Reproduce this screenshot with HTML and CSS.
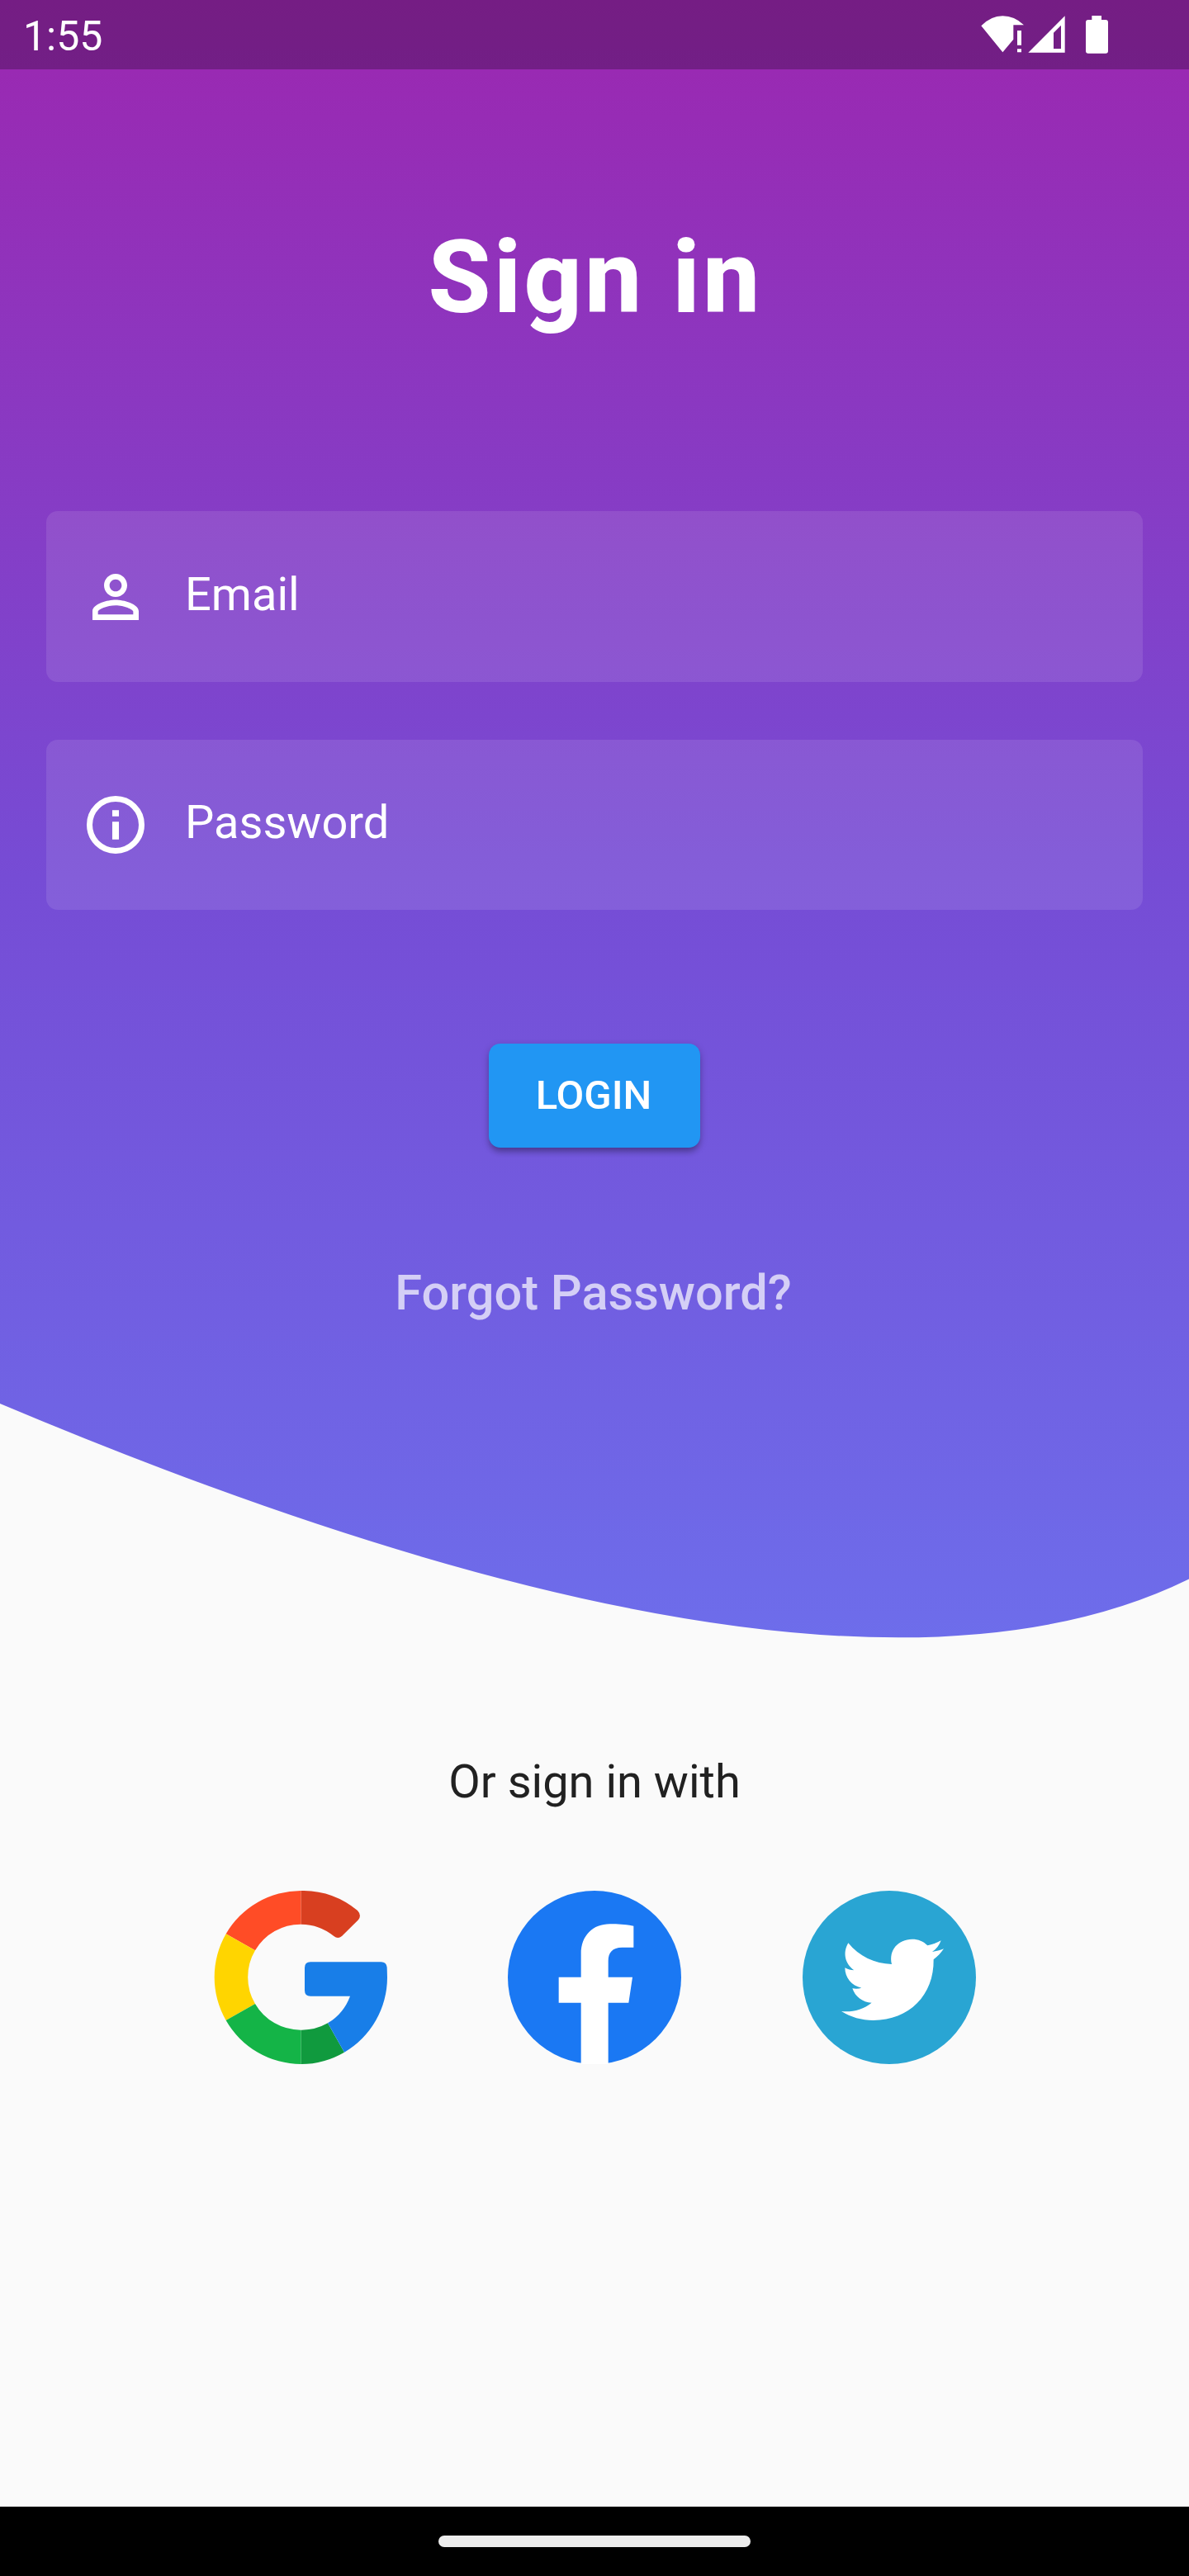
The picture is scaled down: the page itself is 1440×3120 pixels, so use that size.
FILE: index.html
```
<!DOCTYPE html>
<html lang="en">
<head>
<meta charset="utf-8">
<title>Sign in</title>
<link rel="stylesheet" href="styles.css">
</head>
<body>
<div class="screen">
  <header class="hero">
    <div class="status-bar">
      <span class="clock">1:55</span>
      <svg class="status-icons" viewBox="0 0 840 252" fill="#fff" aria-hidden="true">
        <path d="M85 94Q120 58 163 58T240 91H202V143L163 190Z"/>
        <path d="M216 111h15v53h-15zM216 178h15v12h-15z"/>
        <path fill-rule="evenodd" d="M256 191L389 58V191ZM348 119V177H375V92Z"/>
        <path d="M487 57h35v15h15q9 0 9 9v104q0 9-9 9h-63q-9 0-9-9V81q0-9 9-9h13z"/>
      </svg>
    </div>
    <h1 class="title">Sign in</h1>
    <form class="form">
      <div class="field">
        <svg class="field-icon" viewBox="0 0 24 24" fill="#fff" aria-hidden="true">
          <path d="M12 5.9c1.16 0 2.1.94 2.1 2.1s-.94 2.1-2.1 2.1S9.9 9.16 9.9 8s.94-2.1 2.1-2.1m0 9c2.97 0 6.1 1.46 6.1 2.1v1.1H5.9V17c0-.64 3.13-2.1 6.1-2.1M12 4C9.79 4 8 5.79 8 8s1.79 4 4 4 4-1.79 4-4-1.79-4-4-4zm0 9c-2.67 0-8 1.34-8 4v3h16v-3c0-2.66-5.33-4-8-4z"/>
        </svg>
        <label class="field-label">Email</label>
      </div>
      <div class="field">
        <svg class="field-icon" viewBox="0 0 24 24" fill="#fff" aria-hidden="true">
          <circle cx="12" cy="12" r="9" fill="none" stroke="#fff" stroke-width="2"/>
          <path d="M10.85 6.9h2.3v2.15h-2.3zM10.85 10.9h2.3v6.2h-2.3z"/>
        </svg>
        <label class="field-label">Password</label>
      </div>
      <button class="login" type="button">LOGIN</button>
      <a class="forgot">Forgot Password?</a>
    </form>
  </header>
  <main class="social">
    <p class="social-label">Or sign in with</p>
    <div class="logos">
      <svg class="logo" viewBox="54 60 630 630" aria-label="Google">
        <path fill="#ff4c26" d="M98 217A315 315 0 0 1 371 60V182A191 191 0 0 0 204 277Z"/>
        <path fill="#d83f20" d="M371 60A315 315 0 0 1 576 132Q592 149 579 166L519 225Q505 237 490 225A191 191 0 0 0 371 182Z"/>
        <path fill="#ffd500" d="M98 217A315 315 0 0 0 98 531L204 471A191 191 0 0 1 204 277Z"/>
        <path fill="#14b447" d="M98 531A315 315 0 0 0 371 690V566A191 191 0 0 1 204 471Z"/>
        <path fill="#109a3e" d="M371 690A315 315 0 0 0 528 647L468 541A191 191 0 0 1 371 566Z"/>
        <path fill="#187ee8" d="M528 647A315 315 0 0 0 684 375L683 338Q680 319 662 319H405Q384 319 384 340V422Q384 443 405 443H549A191 191 0 0 1 468 541Z"/>
      </svg>
      <svg class="logo" viewBox="45 60 630 630" aria-label="Facebook">
        <circle cx="360" cy="375" r="315" fill="#1a78f3"/>
        <path fill="#fff" d="M311 690V467H230V374H311V290C311 222 355 181 416 181C450 181 480 183 502 188V266H460C425 266 410 285 410 315V374H498L484 467H410V690Z"/>
      </svg>
      <svg class="logo" viewBox="63 60 630 630" aria-label="Twitter">
        <circle cx="378" cy="375" r="315" fill="#29a5d3"/>
        <path fill="#fff" d="M229 250C268 298 325 326 387 327C375 275 410 237 461 236C483 236 503 244 517 259C534 256 550 250 566 241C560 258 549 273 534 282C549 280 563 276 576 271C566 286 554 299 539 310C541 440 450 531 320 531C278 531 238 519 204 498C244 502 283 492 314 467C281 466 254 445 244 415C255 417 266 417 277 413C241 406 217 376 217 340C227 346 239 349 250 349C217 326 208 285 229 250Z"/>
      </svg>
    </div>
  </main>
  <footer class="nav-bar"><span class="nav-pill"></span></footer>
</div>
</body>
</html>
```
FILE: styles.css
```
* { box-sizing: border-box; }
body {
  margin: 0;
  background: #fafafa;
  font-family: Roboto, "Liberation Sans", sans-serif;
}
.screen {
  display: flex;
  flex-direction: column;
  width: 1440px;
  height: 3120px;
  background: #fafafa;
}
.hero {
  flex: none;
  height: 2125px;
  background: linear-gradient(180deg, #9c27b0 0%, #764cd5 50%, #6c72ee 100%);
  clip-path: path("M0 0H1440V1912.5Q1008 2125 0 1700Z");
}
.status-bar {
  display: flex;
  justify-content: space-between;
  height: 84px;
  padding-left: 28px;
  background: rgba(0, 0, 0, .25);
}
.clock {
  padding-top: 4px;
  color: #fff;
  font-size: 50px;
  line-height: 80px;
}
.status-icons { width: 280px; height: 84px; }
.title {
  margin: 180px 0 211px;
  padding-left: 2px;
  color: #fff;
  font-size: 122.5px;
  font-weight: 800;
  line-height: 144px;
  letter-spacing: 3.5px;
  text-align: center;
}
.form {
  display: flex;
  flex-direction: column;
  align-items: center;
  padding: 0 56px;
}
.field {
  display: flex;
  align-items: center;
  gap: 42px;
  width: 100%;
  height: 206.5px;
  margin-bottom: 70px;
  padding-left: 42px;
  border-radius: 14px;
  background: rgba(255, 255, 255, .1);
}
.field-icon { width: 84px; height: 84px; margin-top: 1px; }
.field-label {
  padding-bottom: 5px;
  color: #fff;
  font-size: 56px;
  line-height: 66px;
}
.login {
  width: 256px;
  height: 126px;
  margin-top: 91.5px;
  padding: 0 2px 0 0;
  border: 0;
  border-radius: 14px;
  background: #2196f3;
  box-shadow: 0 7px 7px -2px rgba(0, 0, 0, .2), 0 3px 10px rgba(0, 0, 0, .22);
  color: #fff;
  font-family: inherit;
  font-size: 49px;
  font-weight: 500;
  line-height: 58px;
}
.forgot {
  margin-top: 141px;
  padding-right: 3px;
  color: rgba(255, 255, 255, .7);
  font-size: 59.5px;
  font-weight: 500;
  line-height: 70px;
}
.social { flex: 1; }
.social-label {
  margin: 0 0 99px;
  color: #212121;
  font-size: 56px;
  line-height: 66px;
  text-align: center;
}
.logos { display: flex; justify-content: center; gap: 146.5px; }
.logo { display: block; width: 210px; height: 210px; }
.nav-bar {
  display: flex;
  align-items: center;
  justify-content: center;
  height: 84px;
  background: #000;
}
.nav-pill {
  width: 378px;
  height: 14px;
  border-radius: 7px;
  background: #ededed;
}
```
